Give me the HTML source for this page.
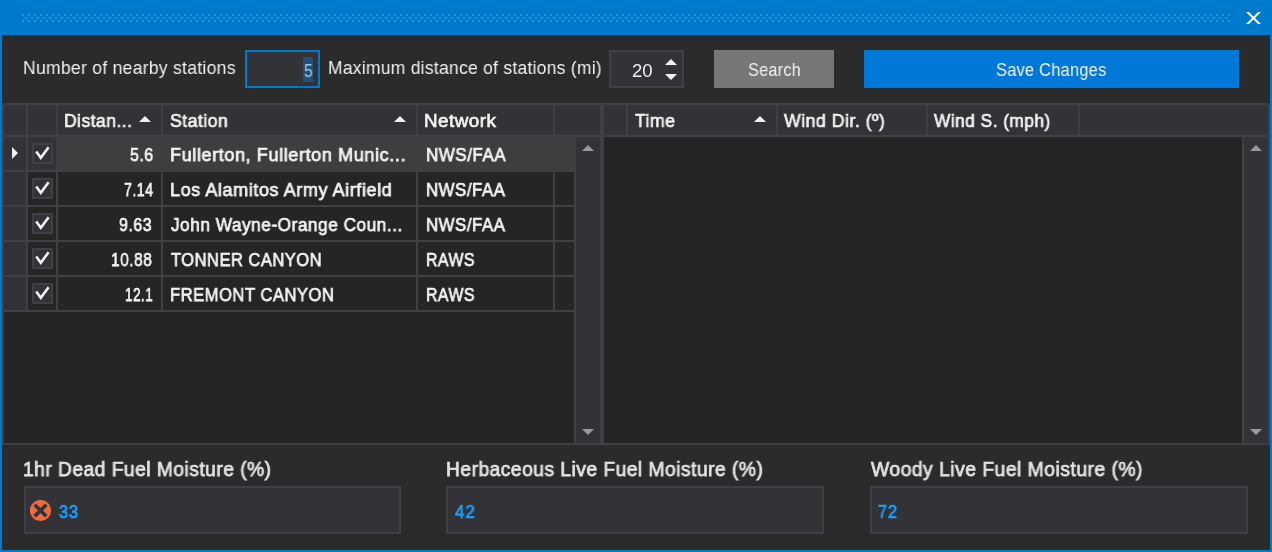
<!DOCTYPE html>
<html><head><meta charset="utf-8"><style>*{margin:0;padding:0;box-sizing:border-box}
html,body{width:1272px;height:552px;overflow:hidden;background:#007acc;font-family:"Liberation Sans",sans-serif}
.a{position:absolute}
.t{position:absolute;white-space:nowrap;transform-origin:0 0;will-change:transform}
</style></head><body>
<div class="a" style="left:2px;top:35px;width:1268px;height:515px;background:#2b2b2b;"></div>
<div class="a" style="left:2px;top:103px;width:600px;height:342px;background:#3f3f46;"></div>
<div class="a" style="left:4px;top:105px;width:22px;height:30px;background:#333337;"></div>
<div class="a" style="left:28px;top:105px;width:28px;height:30px;background:#333337;"></div>
<div class="a" style="left:58px;top:105px;width:103px;height:30px;background:#333337;"></div>
<div class="a" style="left:163px;top:105px;width:253px;height:30px;background:#333337;"></div>
<div class="a" style="left:418px;top:105px;width:135px;height:30px;background:#333337;"></div>
<div class="a" style="left:555px;top:105px;width:45px;height:30px;background:#333337;"></div>
<div class="a" style="left:4px;top:312px;width:570px;height:131px;background:#252526;"></div>
<div class="a" style="left:576px;top:137px;width:24px;height:306px;background:#333337;"></div>
<div class="a" style="left:4px;top:137px;width:22px;height:33px;background:#333337;"></div>
<div class="a" style="left:28px;top:137px;width:28px;height:33px;background:#333337;"></div>
<div class="a" style="left:58px;top:137px;width:518px;height:35px;background:#3e3e40;"></div>
<div class="a" style="left:32px;top:143px;width:21px;height:21px;background:#3f3f46;"></div>
<div class="a" style="left:34px;top:145px;width:17px;height:17px;background:#333337;"></div>
<svg class="a" style="left:32px;top:143px" width="21" height="21"><path d="M4.2 8.6 L8.8 14.8 L16.6 4.2" stroke="#f1f1f1" stroke-width="2.6" fill="none" stroke-linejoin="miter" stroke-linecap="butt"/></svg>
<svg class="a" style="left:12px;top:147px" width="7" height="13"><path d="M0 0 L6 6 L0 12 Z" fill="#f1f1f1"/></svg>
<div class="t" style="left:129.51px;top:144.92px;line-height:19px;font-size:19px;font-weight:400;color:#f1f1f1;-webkit-text-stroke:0.75px #f1f1f1;letter-spacing:0.6px;transform:scaleX(0.8375)">5.6</div>
<div class="t" style="left:170.24px;top:144.92px;line-height:19px;font-size:19px;font-weight:400;color:#f1f1f1;-webkit-text-stroke:0.75px #f1f1f1;letter-spacing:0.6px;transform:scaleX(0.9535)">Fullerton, Fullerton Munic...</div>
<div class="t" style="left:425.92px;top:144.92px;line-height:19px;font-size:19px;font-weight:400;color:#f1f1f1;-webkit-text-stroke:0.75px #f1f1f1;letter-spacing:0.6px;transform:scaleX(0.8928)">NWS/FAA</div>
<div class="a" style="left:4px;top:172px;width:22px;height:33px;background:#333337;"></div>
<div class="a" style="left:28px;top:172px;width:28px;height:33px;background:#252526;"></div>
<div class="a" style="left:58px;top:172px;width:103px;height:33px;background:#252526;"></div>
<div class="a" style="left:163px;top:172px;width:253px;height:33px;background:#252526;"></div>
<div class="a" style="left:418px;top:172px;width:135px;height:33px;background:#252526;"></div>
<div class="a" style="left:555px;top:172px;width:19px;height:33px;background:#252526;"></div>
<div class="a" style="left:32px;top:178px;width:21px;height:21px;background:#3f3f46;"></div>
<div class="a" style="left:34px;top:180px;width:17px;height:17px;background:#333337;"></div>
<svg class="a" style="left:32px;top:178px" width="21" height="21"><path d="M4.2 8.6 L8.8 14.8 L16.6 4.2" stroke="#f1f1f1" stroke-width="2.6" fill="none" stroke-linejoin="miter" stroke-linecap="butt"/></svg>
<div class="t" style="left:123.58px;top:179.92px;line-height:19px;font-size:19px;font-weight:400;color:#f1f1f1;-webkit-text-stroke:0.75px #f1f1f1;letter-spacing:0.6px;transform:scaleX(0.7492)">7.14</div>
<div class="t" style="left:170.25px;top:179.92px;line-height:19px;font-size:19px;font-weight:400;color:#f1f1f1;-webkit-text-stroke:0.75px #f1f1f1;letter-spacing:0.6px;transform:scaleX(0.9491)">Los Alamitos Army Airfield</div>
<div class="t" style="left:425.62px;top:179.92px;line-height:19px;font-size:19px;font-weight:400;color:#f1f1f1;-webkit-text-stroke:0.75px #f1f1f1;letter-spacing:0.6px;transform:scaleX(0.8846)">NWS/FAA</div>
<div class="a" style="left:4px;top:207px;width:22px;height:33px;background:#333337;"></div>
<div class="a" style="left:28px;top:207px;width:28px;height:33px;background:#252526;"></div>
<div class="a" style="left:58px;top:207px;width:103px;height:33px;background:#252526;"></div>
<div class="a" style="left:163px;top:207px;width:253px;height:33px;background:#252526;"></div>
<div class="a" style="left:418px;top:207px;width:135px;height:33px;background:#252526;"></div>
<div class="a" style="left:555px;top:207px;width:19px;height:33px;background:#252526;"></div>
<div class="a" style="left:32px;top:213px;width:21px;height:21px;background:#3f3f46;"></div>
<div class="a" style="left:34px;top:215px;width:17px;height:17px;background:#333337;"></div>
<svg class="a" style="left:32px;top:213px" width="21" height="21"><path d="M4.2 8.6 L8.8 14.8 L16.6 4.2" stroke="#f1f1f1" stroke-width="2.6" fill="none" stroke-linejoin="miter" stroke-linecap="butt"/></svg>
<div class="t" style="left:119.20px;top:214.92px;line-height:19px;font-size:19px;font-weight:400;color:#f1f1f1;-webkit-text-stroke:0.75px #f1f1f1;letter-spacing:0.6px;transform:scaleX(0.8409)">9.63</div>
<div class="t" style="left:171.20px;top:214.92px;line-height:19px;font-size:19px;font-weight:400;color:#f1f1f1;-webkit-text-stroke:0.75px #f1f1f1;letter-spacing:0.6px;transform:scaleX(0.9049)">John Wayne-Orange Coun...</div>
<div class="t" style="left:425.62px;top:214.92px;line-height:19px;font-size:19px;font-weight:400;color:#f1f1f1;-webkit-text-stroke:0.75px #f1f1f1;letter-spacing:0.6px;transform:scaleX(0.8846)">NWS/FAA</div>
<div class="a" style="left:4px;top:242px;width:22px;height:33px;background:#333337;"></div>
<div class="a" style="left:28px;top:242px;width:28px;height:33px;background:#252526;"></div>
<div class="a" style="left:58px;top:242px;width:103px;height:33px;background:#252526;"></div>
<div class="a" style="left:163px;top:242px;width:253px;height:33px;background:#252526;"></div>
<div class="a" style="left:418px;top:242px;width:135px;height:33px;background:#252526;"></div>
<div class="a" style="left:555px;top:242px;width:19px;height:33px;background:#252526;"></div>
<div class="a" style="left:32px;top:248px;width:21px;height:21px;background:#3f3f46;"></div>
<div class="a" style="left:34px;top:250px;width:17px;height:17px;background:#333337;"></div>
<svg class="a" style="left:32px;top:248px" width="21" height="21"><path d="M4.2 8.6 L8.8 14.8 L16.6 4.2" stroke="#f1f1f1" stroke-width="2.6" fill="none" stroke-linejoin="miter" stroke-linecap="butt"/></svg>
<div class="t" style="left:111.18px;top:249.92px;line-height:19px;font-size:19px;font-weight:400;color:#f1f1f1;-webkit-text-stroke:0.75px #f1f1f1;letter-spacing:0.6px;transform:scaleX(0.8163)">10.88</div>
<div class="t" style="left:171.20px;top:249.92px;line-height:19px;font-size:19px;font-weight:400;color:#f1f1f1;-webkit-text-stroke:0.75px #f1f1f1;letter-spacing:0.6px;transform:scaleX(0.8668)">TONNER CANYON</div>
<div class="t" style="left:425.67px;top:249.92px;line-height:19px;font-size:19px;font-weight:400;color:#f1f1f1;-webkit-text-stroke:0.75px #f1f1f1;letter-spacing:0.6px;transform:scaleX(0.8328)">RAWS</div>
<div class="a" style="left:4px;top:277px;width:22px;height:33px;background:#333337;"></div>
<div class="a" style="left:28px;top:277px;width:28px;height:33px;background:#252526;"></div>
<div class="a" style="left:58px;top:277px;width:103px;height:33px;background:#252526;"></div>
<div class="a" style="left:163px;top:277px;width:253px;height:33px;background:#252526;"></div>
<div class="a" style="left:418px;top:277px;width:135px;height:33px;background:#252526;"></div>
<div class="a" style="left:555px;top:277px;width:19px;height:33px;background:#252526;"></div>
<div class="a" style="left:32px;top:283px;width:21px;height:21px;background:#3f3f46;"></div>
<div class="a" style="left:34px;top:285px;width:17px;height:17px;background:#333337;"></div>
<svg class="a" style="left:32px;top:283px" width="21" height="21"><path d="M4.2 8.6 L8.8 14.8 L16.6 4.2" stroke="#f1f1f1" stroke-width="2.6" fill="none" stroke-linejoin="miter" stroke-linecap="butt"/></svg>
<div class="t" style="left:124.78px;top:284.92px;line-height:19px;font-size:19px;font-weight:400;color:#f1f1f1;-webkit-text-stroke:0.75px #f1f1f1;letter-spacing:0.6px;transform:scaleX(0.7157)">12.1</div>
<div class="t" style="left:170.33px;top:284.92px;line-height:19px;font-size:19px;font-weight:400;color:#f1f1f1;-webkit-text-stroke:0.75px #f1f1f1;letter-spacing:0.6px;transform:scaleX(0.8721)">FREMONT CANYON</div>
<div class="t" style="left:425.67px;top:284.92px;line-height:19px;font-size:19px;font-weight:400;color:#f1f1f1;-webkit-text-stroke:0.75px #f1f1f1;letter-spacing:0.6px;transform:scaleX(0.8328)">RAWS</div>
<div class="t" style="left:64.15px;top:111.84px;line-height:18.5px;font-size:18.5px;font-weight:400;color:#f1f1f1;-webkit-text-stroke:0.7px #f1f1f1;letter-spacing:0.5px;transform:scaleX(0.9454)">Distan...</div>
<svg class="a" style="left:139px;top:116px" width="12" height="6"><path d="M0 6 L6.0 0 L12 6 Z" fill="#f1f1f1"/></svg>
<div class="t" style="left:169.81px;top:111.84px;line-height:18.5px;font-size:18.5px;font-weight:400;color:#f1f1f1;-webkit-text-stroke:0.7px #f1f1f1;letter-spacing:0.5px;transform:scaleX(0.9538)">Station</div>
<svg class="a" style="left:394px;top:116px" width="12" height="6"><path d="M0 6 L6.0 0 L12 6 Z" fill="#f1f1f1"/></svg>
<div class="t" style="left:424.09px;top:111.84px;line-height:18.5px;font-size:18.5px;font-weight:400;color:#f1f1f1;-webkit-text-stroke:0.7px #f1f1f1;letter-spacing:0.5px;transform:scaleX(1.0155)">Network</div>
<svg class="a" style="left:582px;top:145px" width="12" height="6"><path d="M0 6 L6.0 0 L12 6 Z" fill="#999999"/></svg>
<svg class="a" style="left:582px;top:429px" width="12" height="6"><path d="M0 0 L6.0 6 L12 0 Z" fill="#999999"/></svg>
<div class="a" style="left:602px;top:103px;width:668px;height:342px;background:#3f3f46;"></div>
<div class="a" style="left:604px;top:105px;width:22px;height:30px;background:#333337;"></div>
<div class="a" style="left:628px;top:105px;width:148px;height:30px;background:#333337;"></div>
<div class="a" style="left:778px;top:105px;width:148px;height:30px;background:#333337;"></div>
<div class="a" style="left:928px;top:105px;width:150px;height:30px;background:#333337;"></div>
<div class="a" style="left:1080px;top:105px;width:188px;height:30px;background:#333337;"></div>
<div class="a" style="left:604px;top:137px;width:638px;height:306px;background:#252526;"></div>
<div class="a" style="left:1244px;top:137px;width:24px;height:306px;background:#333337;"></div>
<div class="t" style="left:634.61px;top:111.84px;line-height:18.5px;font-size:18.5px;font-weight:400;color:#f1f1f1;-webkit-text-stroke:0.7px #f1f1f1;letter-spacing:0.5px;transform:scaleX(0.9508)">Time</div>
<svg class="a" style="left:754px;top:116px" width="12" height="6"><path d="M0 6 L6.0 0 L12 6 Z" fill="#f1f1f1"/></svg>
<div class="t" style="left:784.49px;top:111.84px;line-height:18.5px;font-size:18.5px;font-weight:400;color:#f1f1f1;-webkit-text-stroke:0.7px #f1f1f1;letter-spacing:0.5px;transform:scaleX(0.9584)">Wind Dir. (º)</div>
<div class="t" style="left:934.48px;top:111.84px;line-height:18.5px;font-size:18.5px;font-weight:400;color:#f1f1f1;-webkit-text-stroke:0.7px #f1f1f1;letter-spacing:0.5px;transform:scaleX(0.9358)">Wind S. (mph)</div>
<svg class="a" style="left:1250px;top:145px" width="12" height="6"><path d="M0 6 L6.0 0 L12 6 Z" fill="#999999"/></svg>
<svg class="a" style="left:1250px;top:429px" width="12" height="6"><path d="M0 0 L6.0 6 L12 0 Z" fill="#999999"/></svg>
<div class="t" style="left:23.45px;top:59.14px;line-height:18.5px;font-size:18.5px;font-weight:400;color:#f1f1f1;letter-spacing:0.3px;transform:scaleX(0.9479)">Number of nearby stations</div>
<div class="a" style="left:245px;top:50px;width:75px;height:38px;background:#007acc;"></div>
<div class="a" style="left:247px;top:52px;width:71px;height:34px;background:#333337;"></div>
<div class="a" style="left:303px;top:57px;width:10px;height:25px;background:#264f78;"></div>
<div class="t" style="left:303.52px;top:62.34px;line-height:18.5px;font-size:18.5px;font-weight:400;color:#9cc8ee;transform:scaleX(0.8425)">5</div>
<div class="t" style="left:328.16px;top:59.14px;line-height:18.5px;font-size:18.5px;font-weight:400;color:#f1f1f1;letter-spacing:0.3px;transform:scaleX(0.9429)">Maximum distance of stations (mi)</div>
<div class="a" style="left:609px;top:50px;width:75px;height:38px;background:#3f3f46;"></div>
<div class="a" style="left:611px;top:52px;width:71px;height:34px;background:#333337;"></div>
<div class="t" style="left:632.42px;top:62.34px;line-height:18.5px;font-size:18.5px;font-weight:400;color:#f1f1f1;transform:scaleX(1.0028)">20</div>
<svg class="a" style="left:665px;top:59px" width="12" height="6"><path d="M0 6 L6.0 0 L12 6 Z" fill="#f1f1f1"/></svg>
<svg class="a" style="left:665px;top:74px" width="12" height="6"><path d="M0 0 L6.0 6 L12 0 Z" fill="#f1f1f1"/></svg>
<div class="a" style="left:714px;top:50px;width:120px;height:38px;background:#777777;"></div>
<div class="t" style="left:747.62px;top:61.14px;line-height:18.5px;font-size:18.5px;font-weight:400;color:#f1f1f1;letter-spacing:0.3px;transform:scaleX(0.8775)">Search</div>
<div class="a" style="left:864px;top:50px;width:375px;height:38px;background:#0078d7;"></div>
<div class="t" style="left:995.62px;top:61.14px;line-height:18.5px;font-size:18.5px;font-weight:400;color:#f1f1f1;letter-spacing:0.3px;transform:scaleX(0.8840)">Save Changes</div>
<div class="t" style="left:23.41px;top:460.49px;line-height:19.5px;font-size:19.5px;font-weight:400;color:#e2e2e2;-webkit-text-stroke:0.75px #e2e2e2;letter-spacing:0.5px;transform:scaleX(0.9841)">1hr Dead Fuel Moisture (%)</div>
<div class="a" style="left:24px;top:486px;width:377px;height:48px;background:#3f3f46;"></div>
<div class="a" style="left:26px;top:488px;width:373px;height:44px;background:#333337;"></div>
<div class="t" style="left:59.41px;top:503.79px;line-height:17.5px;font-size:17.5px;font-weight:400;color:#1e9fff;-webkit-text-stroke:0.7px #1e9fff;letter-spacing:1px;transform:scaleX(0.9291)">33</div>
<div class="t" style="left:446.41px;top:460.49px;line-height:19.5px;font-size:19.5px;font-weight:400;color:#e2e2e2;-webkit-text-stroke:0.75px #e2e2e2;letter-spacing:0.5px;transform:scaleX(0.9850)">Herbaceous Live Fuel Moisture (%)</div>
<div class="a" style="left:446px;top:486px;width:378px;height:48px;background:#3f3f46;"></div>
<div class="a" style="left:448px;top:488px;width:374px;height:44px;background:#333337;"></div>
<div class="t" style="left:454.60px;top:503.79px;line-height:17.5px;font-size:17.5px;font-weight:400;color:#1e9fff;-webkit-text-stroke:0.7px #1e9fff;letter-spacing:1px;transform:scaleX(0.9662)">42</div>
<div class="t" style="left:871.39px;top:460.49px;line-height:19.5px;font-size:19.5px;font-weight:400;color:#e2e2e2;-webkit-text-stroke:0.75px #e2e2e2;letter-spacing:0.5px;transform:scaleX(0.9897)">Woody Live Fuel Moisture (%)</div>
<div class="a" style="left:870px;top:486px;width:378px;height:48px;background:#3f3f46;"></div>
<div class="a" style="left:872px;top:488px;width:374px;height:44px;background:#333337;"></div>
<div class="t" style="left:878.42px;top:503.79px;line-height:17.5px;font-size:17.5px;font-weight:400;color:#1e9fff;-webkit-text-stroke:0.7px #1e9fff;letter-spacing:1px;transform:scaleX(0.9265)">72</div>
<svg class="a" style="left:30px;top:500px" width="22" height="22"><circle cx="10.5" cy="10.5" r="10.6" fill="#ef6a3e"/><path d="M4.7 4.7 L16.3 16.3 M16.3 4.7 L4.7 16.3" stroke="#333337" stroke-width="3.6"/></svg>
<svg class="a" style="left:0;top:0" width="1272" height="35"><path d="M22 14h2v2h-2zM22 20h2v2h-2zM28 14h2v2h-2zM28 20h2v2h-2zM34 14h2v2h-2zM34 20h2v2h-2zM40 14h2v2h-2zM40 20h2v2h-2zM46 14h2v2h-2zM46 20h2v2h-2zM52 14h2v2h-2zM52 20h2v2h-2zM58 14h2v2h-2zM58 20h2v2h-2zM64 14h2v2h-2zM64 20h2v2h-2zM70 14h2v2h-2zM70 20h2v2h-2zM76 14h2v2h-2zM76 20h2v2h-2zM82 14h2v2h-2zM82 20h2v2h-2zM88 14h2v2h-2zM88 20h2v2h-2zM94 14h2v2h-2zM94 20h2v2h-2zM100 14h2v2h-2zM100 20h2v2h-2zM106 14h2v2h-2zM106 20h2v2h-2zM112 14h2v2h-2zM112 20h2v2h-2zM118 14h2v2h-2zM118 20h2v2h-2zM124 14h2v2h-2zM124 20h2v2h-2zM130 14h2v2h-2zM130 20h2v2h-2zM136 14h2v2h-2zM136 20h2v2h-2zM142 14h2v2h-2zM142 20h2v2h-2zM148 14h2v2h-2zM148 20h2v2h-2zM154 14h2v2h-2zM154 20h2v2h-2zM160 14h2v2h-2zM160 20h2v2h-2zM166 14h2v2h-2zM166 20h2v2h-2zM172 14h2v2h-2zM172 20h2v2h-2zM178 14h2v2h-2zM178 20h2v2h-2zM184 14h2v2h-2zM184 20h2v2h-2zM190 14h2v2h-2zM190 20h2v2h-2zM196 14h2v2h-2zM196 20h2v2h-2zM202 14h2v2h-2zM202 20h2v2h-2zM208 14h2v2h-2zM208 20h2v2h-2zM214 14h2v2h-2zM214 20h2v2h-2zM220 14h2v2h-2zM220 20h2v2h-2zM226 14h2v2h-2zM226 20h2v2h-2zM232 14h2v2h-2zM232 20h2v2h-2zM238 14h2v2h-2zM238 20h2v2h-2zM244 14h2v2h-2zM244 20h2v2h-2zM250 14h2v2h-2zM250 20h2v2h-2zM256 14h2v2h-2zM256 20h2v2h-2zM262 14h2v2h-2zM262 20h2v2h-2zM268 14h2v2h-2zM268 20h2v2h-2zM274 14h2v2h-2zM274 20h2v2h-2zM280 14h2v2h-2zM280 20h2v2h-2zM286 14h2v2h-2zM286 20h2v2h-2zM292 14h2v2h-2zM292 20h2v2h-2zM298 14h2v2h-2zM298 20h2v2h-2zM304 14h2v2h-2zM304 20h2v2h-2zM310 14h2v2h-2zM310 20h2v2h-2zM316 14h2v2h-2zM316 20h2v2h-2zM322 14h2v2h-2zM322 20h2v2h-2zM328 14h2v2h-2zM328 20h2v2h-2zM334 14h2v2h-2zM334 20h2v2h-2zM340 14h2v2h-2zM340 20h2v2h-2zM346 14h2v2h-2zM346 20h2v2h-2zM352 14h2v2h-2zM352 20h2v2h-2zM358 14h2v2h-2zM358 20h2v2h-2zM364 14h2v2h-2zM364 20h2v2h-2zM370 14h2v2h-2zM370 20h2v2h-2zM376 14h2v2h-2zM376 20h2v2h-2zM382 14h2v2h-2zM382 20h2v2h-2zM388 14h2v2h-2zM388 20h2v2h-2zM394 14h2v2h-2zM394 20h2v2h-2zM400 14h2v2h-2zM400 20h2v2h-2zM406 14h2v2h-2zM406 20h2v2h-2zM412 14h2v2h-2zM412 20h2v2h-2zM418 14h2v2h-2zM418 20h2v2h-2zM424 14h2v2h-2zM424 20h2v2h-2zM430 14h2v2h-2zM430 20h2v2h-2zM436 14h2v2h-2zM436 20h2v2h-2zM442 14h2v2h-2zM442 20h2v2h-2zM448 14h2v2h-2zM448 20h2v2h-2zM454 14h2v2h-2zM454 20h2v2h-2zM460 14h2v2h-2zM460 20h2v2h-2zM466 14h2v2h-2zM466 20h2v2h-2zM472 14h2v2h-2zM472 20h2v2h-2zM478 14h2v2h-2zM478 20h2v2h-2zM484 14h2v2h-2zM484 20h2v2h-2zM490 14h2v2h-2zM490 20h2v2h-2zM496 14h2v2h-2zM496 20h2v2h-2zM502 14h2v2h-2zM502 20h2v2h-2zM508 14h2v2h-2zM508 20h2v2h-2zM514 14h2v2h-2zM514 20h2v2h-2zM520 14h2v2h-2zM520 20h2v2h-2zM526 14h2v2h-2zM526 20h2v2h-2zM532 14h2v2h-2zM532 20h2v2h-2zM538 14h2v2h-2zM538 20h2v2h-2zM544 14h2v2h-2zM544 20h2v2h-2zM550 14h2v2h-2zM550 20h2v2h-2zM556 14h2v2h-2zM556 20h2v2h-2zM562 14h2v2h-2zM562 20h2v2h-2zM568 14h2v2h-2zM568 20h2v2h-2zM574 14h2v2h-2zM574 20h2v2h-2zM580 14h2v2h-2zM580 20h2v2h-2zM586 14h2v2h-2zM586 20h2v2h-2zM592 14h2v2h-2zM592 20h2v2h-2zM598 14h2v2h-2zM598 20h2v2h-2zM604 14h2v2h-2zM604 20h2v2h-2zM610 14h2v2h-2zM610 20h2v2h-2zM616 14h2v2h-2zM616 20h2v2h-2zM622 14h2v2h-2zM622 20h2v2h-2zM628 14h2v2h-2zM628 20h2v2h-2zM634 14h2v2h-2zM634 20h2v2h-2zM640 14h2v2h-2zM640 20h2v2h-2zM646 14h2v2h-2zM646 20h2v2h-2zM652 14h2v2h-2zM652 20h2v2h-2zM658 14h2v2h-2zM658 20h2v2h-2zM664 14h2v2h-2zM664 20h2v2h-2zM670 14h2v2h-2zM670 20h2v2h-2zM676 14h2v2h-2zM676 20h2v2h-2zM682 14h2v2h-2zM682 20h2v2h-2zM688 14h2v2h-2zM688 20h2v2h-2zM694 14h2v2h-2zM694 20h2v2h-2zM700 14h2v2h-2zM700 20h2v2h-2zM706 14h2v2h-2zM706 20h2v2h-2zM712 14h2v2h-2zM712 20h2v2h-2zM718 14h2v2h-2zM718 20h2v2h-2zM724 14h2v2h-2zM724 20h2v2h-2zM730 14h2v2h-2zM730 20h2v2h-2zM736 14h2v2h-2zM736 20h2v2h-2zM742 14h2v2h-2zM742 20h2v2h-2zM748 14h2v2h-2zM748 20h2v2h-2zM754 14h2v2h-2zM754 20h2v2h-2zM760 14h2v2h-2zM760 20h2v2h-2zM766 14h2v2h-2zM766 20h2v2h-2zM772 14h2v2h-2zM772 20h2v2h-2zM778 14h2v2h-2zM778 20h2v2h-2zM784 14h2v2h-2zM784 20h2v2h-2zM790 14h2v2h-2zM790 20h2v2h-2zM796 14h2v2h-2zM796 20h2v2h-2zM802 14h2v2h-2zM802 20h2v2h-2zM808 14h2v2h-2zM808 20h2v2h-2zM814 14h2v2h-2zM814 20h2v2h-2zM820 14h2v2h-2zM820 20h2v2h-2zM826 14h2v2h-2zM826 20h2v2h-2zM832 14h2v2h-2zM832 20h2v2h-2zM838 14h2v2h-2zM838 20h2v2h-2zM844 14h2v2h-2zM844 20h2v2h-2zM850 14h2v2h-2zM850 20h2v2h-2zM856 14h2v2h-2zM856 20h2v2h-2zM862 14h2v2h-2zM862 20h2v2h-2zM868 14h2v2h-2zM868 20h2v2h-2zM874 14h2v2h-2zM874 20h2v2h-2zM880 14h2v2h-2zM880 20h2v2h-2zM886 14h2v2h-2zM886 20h2v2h-2zM892 14h2v2h-2zM892 20h2v2h-2zM898 14h2v2h-2zM898 20h2v2h-2zM904 14h2v2h-2zM904 20h2v2h-2zM910 14h2v2h-2zM910 20h2v2h-2zM916 14h2v2h-2zM916 20h2v2h-2zM922 14h2v2h-2zM922 20h2v2h-2zM928 14h2v2h-2zM928 20h2v2h-2zM934 14h2v2h-2zM934 20h2v2h-2zM940 14h2v2h-2zM940 20h2v2h-2zM946 14h2v2h-2zM946 20h2v2h-2zM952 14h2v2h-2zM952 20h2v2h-2zM958 14h2v2h-2zM958 20h2v2h-2zM964 14h2v2h-2zM964 20h2v2h-2zM970 14h2v2h-2zM970 20h2v2h-2zM976 14h2v2h-2zM976 20h2v2h-2zM982 14h2v2h-2zM982 20h2v2h-2zM988 14h2v2h-2zM988 20h2v2h-2zM994 14h2v2h-2zM994 20h2v2h-2zM1000 14h2v2h-2zM1000 20h2v2h-2zM1006 14h2v2h-2zM1006 20h2v2h-2zM1012 14h2v2h-2zM1012 20h2v2h-2zM1018 14h2v2h-2zM1018 20h2v2h-2zM1024 14h2v2h-2zM1024 20h2v2h-2zM1030 14h2v2h-2zM1030 20h2v2h-2zM1036 14h2v2h-2zM1036 20h2v2h-2zM1042 14h2v2h-2zM1042 20h2v2h-2zM1048 14h2v2h-2zM1048 20h2v2h-2zM1054 14h2v2h-2zM1054 20h2v2h-2zM1060 14h2v2h-2zM1060 20h2v2h-2zM1066 14h2v2h-2zM1066 20h2v2h-2zM1072 14h2v2h-2zM1072 20h2v2h-2zM1078 14h2v2h-2zM1078 20h2v2h-2zM1084 14h2v2h-2zM1084 20h2v2h-2zM1090 14h2v2h-2zM1090 20h2v2h-2zM1096 14h2v2h-2zM1096 20h2v2h-2zM1102 14h2v2h-2zM1102 20h2v2h-2zM1108 14h2v2h-2zM1108 20h2v2h-2zM1114 14h2v2h-2zM1114 20h2v2h-2zM1120 14h2v2h-2zM1120 20h2v2h-2zM1126 14h2v2h-2zM1126 20h2v2h-2zM1132 14h2v2h-2zM1132 20h2v2h-2zM1138 14h2v2h-2zM1138 20h2v2h-2zM1144 14h2v2h-2zM1144 20h2v2h-2zM1150 14h2v2h-2zM1150 20h2v2h-2zM1156 14h2v2h-2zM1156 20h2v2h-2zM1162 14h2v2h-2zM1162 20h2v2h-2zM1168 14h2v2h-2zM1168 20h2v2h-2zM1174 14h2v2h-2zM1174 20h2v2h-2zM1180 14h2v2h-2zM1180 20h2v2h-2zM1186 14h2v2h-2zM1186 20h2v2h-2zM1192 14h2v2h-2zM1192 20h2v2h-2zM1198 14h2v2h-2zM1198 20h2v2h-2zM1204 14h2v2h-2zM1204 20h2v2h-2zM1210 14h2v2h-2zM1210 20h2v2h-2zM1216 14h2v2h-2zM1216 20h2v2h-2zM1222 14h2v2h-2zM1222 20h2v2h-2zM1228 14h2v2h-2zM1228 20h2v2h-2zM25 17h2v2h-2zM31 17h2v2h-2zM37 17h2v2h-2zM43 17h2v2h-2zM49 17h2v2h-2zM55 17h2v2h-2zM61 17h2v2h-2zM67 17h2v2h-2zM73 17h2v2h-2zM79 17h2v2h-2zM85 17h2v2h-2zM91 17h2v2h-2zM97 17h2v2h-2zM103 17h2v2h-2zM109 17h2v2h-2zM115 17h2v2h-2zM121 17h2v2h-2zM127 17h2v2h-2zM133 17h2v2h-2zM139 17h2v2h-2zM145 17h2v2h-2zM151 17h2v2h-2zM157 17h2v2h-2zM163 17h2v2h-2zM169 17h2v2h-2zM175 17h2v2h-2zM181 17h2v2h-2zM187 17h2v2h-2zM193 17h2v2h-2zM199 17h2v2h-2zM205 17h2v2h-2zM211 17h2v2h-2zM217 17h2v2h-2zM223 17h2v2h-2zM229 17h2v2h-2zM235 17h2v2h-2zM241 17h2v2h-2zM247 17h2v2h-2zM253 17h2v2h-2zM259 17h2v2h-2zM265 17h2v2h-2zM271 17h2v2h-2zM277 17h2v2h-2zM283 17h2v2h-2zM289 17h2v2h-2zM295 17h2v2h-2zM301 17h2v2h-2zM307 17h2v2h-2zM313 17h2v2h-2zM319 17h2v2h-2zM325 17h2v2h-2zM331 17h2v2h-2zM337 17h2v2h-2zM343 17h2v2h-2zM349 17h2v2h-2zM355 17h2v2h-2zM361 17h2v2h-2zM367 17h2v2h-2zM373 17h2v2h-2zM379 17h2v2h-2zM385 17h2v2h-2zM391 17h2v2h-2zM397 17h2v2h-2zM403 17h2v2h-2zM409 17h2v2h-2zM415 17h2v2h-2zM421 17h2v2h-2zM427 17h2v2h-2zM433 17h2v2h-2zM439 17h2v2h-2zM445 17h2v2h-2zM451 17h2v2h-2zM457 17h2v2h-2zM463 17h2v2h-2zM469 17h2v2h-2zM475 17h2v2h-2zM481 17h2v2h-2zM487 17h2v2h-2zM493 17h2v2h-2zM499 17h2v2h-2zM505 17h2v2h-2zM511 17h2v2h-2zM517 17h2v2h-2zM523 17h2v2h-2zM529 17h2v2h-2zM535 17h2v2h-2zM541 17h2v2h-2zM547 17h2v2h-2zM553 17h2v2h-2zM559 17h2v2h-2zM565 17h2v2h-2zM571 17h2v2h-2zM577 17h2v2h-2zM583 17h2v2h-2zM589 17h2v2h-2zM595 17h2v2h-2zM601 17h2v2h-2zM607 17h2v2h-2zM613 17h2v2h-2zM619 17h2v2h-2zM625 17h2v2h-2zM631 17h2v2h-2zM637 17h2v2h-2zM643 17h2v2h-2zM649 17h2v2h-2zM655 17h2v2h-2zM661 17h2v2h-2zM667 17h2v2h-2zM673 17h2v2h-2zM679 17h2v2h-2zM685 17h2v2h-2zM691 17h2v2h-2zM697 17h2v2h-2zM703 17h2v2h-2zM709 17h2v2h-2zM715 17h2v2h-2zM721 17h2v2h-2zM727 17h2v2h-2zM733 17h2v2h-2zM739 17h2v2h-2zM745 17h2v2h-2zM751 17h2v2h-2zM757 17h2v2h-2zM763 17h2v2h-2zM769 17h2v2h-2zM775 17h2v2h-2zM781 17h2v2h-2zM787 17h2v2h-2zM793 17h2v2h-2zM799 17h2v2h-2zM805 17h2v2h-2zM811 17h2v2h-2zM817 17h2v2h-2zM823 17h2v2h-2zM829 17h2v2h-2zM835 17h2v2h-2zM841 17h2v2h-2zM847 17h2v2h-2zM853 17h2v2h-2zM859 17h2v2h-2zM865 17h2v2h-2zM871 17h2v2h-2zM877 17h2v2h-2zM883 17h2v2h-2zM889 17h2v2h-2zM895 17h2v2h-2zM901 17h2v2h-2zM907 17h2v2h-2zM913 17h2v2h-2zM919 17h2v2h-2zM925 17h2v2h-2zM931 17h2v2h-2zM937 17h2v2h-2zM943 17h2v2h-2zM949 17h2v2h-2zM955 17h2v2h-2zM961 17h2v2h-2zM967 17h2v2h-2zM973 17h2v2h-2zM979 17h2v2h-2zM985 17h2v2h-2zM991 17h2v2h-2zM997 17h2v2h-2zM1003 17h2v2h-2zM1009 17h2v2h-2zM1015 17h2v2h-2zM1021 17h2v2h-2zM1027 17h2v2h-2zM1033 17h2v2h-2zM1039 17h2v2h-2zM1045 17h2v2h-2zM1051 17h2v2h-2zM1057 17h2v2h-2zM1063 17h2v2h-2zM1069 17h2v2h-2zM1075 17h2v2h-2zM1081 17h2v2h-2zM1087 17h2v2h-2zM1093 17h2v2h-2zM1099 17h2v2h-2zM1105 17h2v2h-2zM1111 17h2v2h-2zM1117 17h2v2h-2zM1123 17h2v2h-2zM1129 17h2v2h-2zM1135 17h2v2h-2zM1141 17h2v2h-2zM1147 17h2v2h-2zM1153 17h2v2h-2zM1159 17h2v2h-2zM1165 17h2v2h-2zM1171 17h2v2h-2zM1177 17h2v2h-2zM1183 17h2v2h-2zM1189 17h2v2h-2zM1195 17h2v2h-2zM1201 17h2v2h-2zM1207 17h2v2h-2zM1213 17h2v2h-2zM1219 17h2v2h-2zM1225 17h2v2h-2z" fill="#3190da"/><path d="M1246 12 L1248.9 12 L1261 24 L1258.1 24 Z M1258.1 12 L1261 12 L1248.9 24 L1246 24 Z" fill="#ffffff"/></svg>
</body></html>
